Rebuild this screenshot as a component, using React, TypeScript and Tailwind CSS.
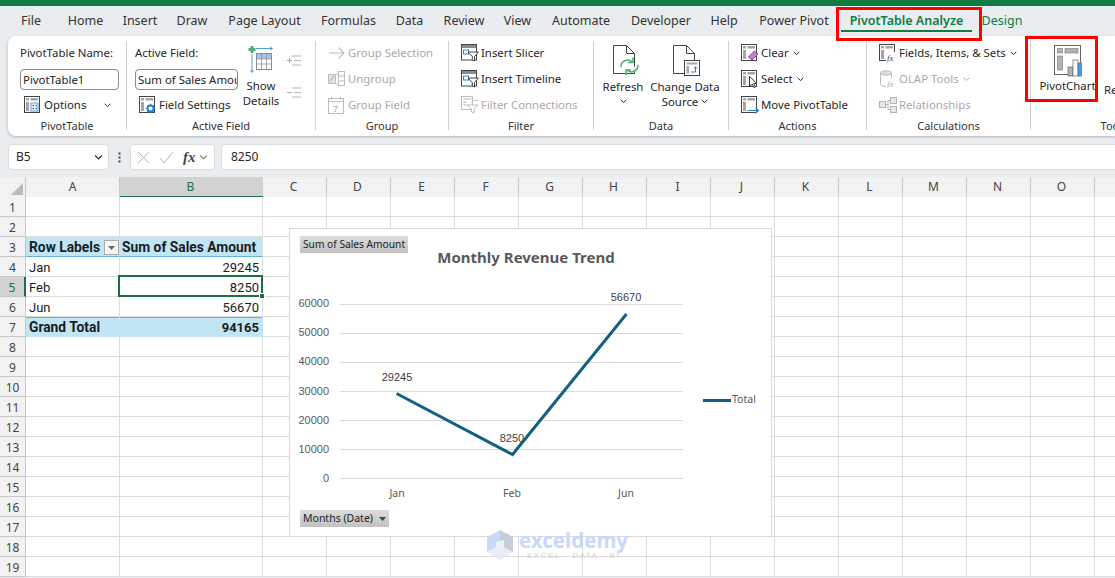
import React from "react";

/* =========================
   DATA
========================= */
const TABS = [
  { name: "File", w: 54 },
  { name: "Home", w: 55 },
  { name: "Insert", w: 54 },
  { name: "Draw", w: 50 },
  { name: "Page Layout", w: 95 },
  { name: "Formulas", w: 73 },
  { name: "Data", w: 49 },
  { name: "Review", w: 60 },
  { name: "View", w: 47 },
  { name: "Automate", w: 80 },
  { name: "Developer", w: 80 },
  { name: "Help", w: 46 },
  { name: "Power Pivot", w: 94 },
];

const COLS = ["C", "D", "E", "F", "G", "H", "I", "J", "K", "L", "M", "N", "O", ""];
const ROWS = Array.from({ length: 19 }, (_, i) => i + 1);
const GRID = "grid grid-cols-[26px_94px_143px_repeat(14,64px)]";

const UI = "font-['Noto_Sans',sans-serif]";
const SHEET = "font-['Roboto',sans-serif]";

/* =========================
   RIBBON ICONS
========================= */
const PivotBase = ({ children, off }: { children?: React.ReactNode; off?: boolean }) => {
  const c = off ? "#bdbdbd" : "#444444";
  const f = off ? "#d4d4d4" : "#a6a6a6";
  return (
    <svg width="18" height="18" viewBox="0 0 18 18" fill="none" className="shrink-0">
      <rect x="0.5" y="0.5" width="15" height="16" stroke={c} fill="#fff" />
      <rect x="2" y="2" width="3" height="2.5" fill={f} />
      <rect x="6.5" y="2" width="7.5" height="2.5" fill={f} />
      <rect x="2" y="6" width="3" height="9" fill={f} />
      {children}
    </svg>
  );
};

const OptionsIcon = () => (
  <PivotBase>
    <rect x="7" y="7" width="7" height="8" fill="#fff" stroke="#3b7fc4" strokeWidth="0.8" />
    <path d="M8.5 9.5h1.5M11.5 9.5h1.5M8.5 12.5h1.5M11.5 12.5h1.5" stroke="#1f6fb5" strokeWidth="1.6" />
  </PivotBase>
);
const GearIcon = () => (
  <PivotBase>
    <circle cx="11.5" cy="12.5" r="3" stroke="#1f7fd0" strokeWidth="1.8" fill="#fff" />
    <path d="M11.5 7.8v2M11.5 15.3v2M7 12.5h2M14 12.5h2.2M8.4 9.4l1.3 1.3M13.4 14.4l1.3 1.3M14.7 9.4l-1.3 1.3M9.7 14.4l-1.3 1.3" stroke="#1f7fd0" strokeWidth="1.2" />
  </PivotBase>
);
const EraserIcon = () => (
  <PivotBase>
    <path d="M7.5 13l6-6 3.5 3-6 6z" fill="#c77fd6" stroke="#8e3aa5" strokeWidth="1" />
  </PivotBase>
);
const CursorIcon = () => (
  <PivotBase>
    <path d="M8.5 6.5l7.5 7h-3.2l1.6 3.5-1.5.6-1.6-3.5-2.8 2z" fill="#fff" stroke="#333" strokeWidth="1" />
  </PivotBase>
);
const MoveIcon = () => (
  <PivotBase>
    <path d="M6.5 14.5h11M14.5 11.8l3 2.7-3 2.7" stroke="#1f84d6" strokeWidth="1.2" />
  </PivotBase>
);
const FxIcon = () => (
  <PivotBase>
    <rect x="7" y="8" width="11" height="10" fill="#fff" />
    <text x="8" y="16.5" fontSize="9" fontStyle="italic" fontFamily="Liberation Serif, serif" fill="#444">fx</text>
  </PivotBase>
);
const SlicerIcon = ({ off }: { off?: boolean }) => {
  const c = off ? "#bdbdbd" : "#444444";
  const b = off ? "#c9c9c9" : "#2f84c9";
  return (
    <svg width="18" height="18" viewBox="0 0 18 18" fill="none" className="shrink-0">
      <rect x="0.5" y="0.5" width="15" height="15.5" stroke={c} />
      <rect x="1" y="1" width="14" height="3" fill={off ? "#d4d4d4" : "#8c8c8c"} />
      <rect x="2.5" y="6" width="5" height="4" stroke={b} />
      <path d="M7 8h10.5l-4 4.5V17l-2.2-1v-3.5z" fill="#fff" stroke={c} />
    </svg>
  );
};
const ConnectIcon = () => (
  <svg width="18" height="18" viewBox="0 0 18 18" fill="none" className="shrink-0">
    <rect x="0.5" y="0.5" width="11" height="13" stroke="#bdbdbd" />
    <path d="M2.5 3h7M2.5 6h3M2.5 9h3" stroke="#c9c9c9" strokeWidth="1.5" />
    <path d="M6 9h11l-4 4v4l-2.5-1v-3z" fill="#fff" stroke="#bdbdbd" />
    <path d="M10 2l3 2.500-3 2.500M13 4.500h4" stroke="#c9c9c9" />
  </svg>
);
const ArrowOff = () => (
  <svg width="18" height="14" viewBox="0 0 18 14" fill="none" className="shrink-0">
    <path d="M1 7h15M10.500 1.500L16 7l-5.500 5.500" stroke="#bdbdbd" strokeWidth="1.1" />
  </svg>
);
const UngroupOff = () => (
  <svg width="18" height="16" viewBox="0 0 18 16" fill="none" className="shrink-0">
    <rect x="0.500" y="3.500" width="7" height="9" fill="#e2e2e2" stroke="#bdbdbd" />
    <path d="M2 10l4-5" stroke="#a8a8a8" />
    <rect x="10.500" y="0.500" width="6" height="14" stroke="#bdbdbd" />
    <path d="M10.500 5h6M10.500 10h6M8 3h2M8 13h2" stroke="#bdbdbd" />
  </svg>
);
const CalendarOff = () => (
  <svg width="16" height="18" viewBox="0 0 16 18" fill="none" className="shrink-0">
    <rect x="0.500" y="2.500" width="15" height="15" stroke="#bdbdbd" />
    <path d="M0.500 5.500h15M3.500 0.500v3M12.500 0.500v3" stroke="#bdbdbd" />
    <text x="5" y="15.500" fontSize="9" fontFamily="Liberation Sans, sans-serif" fill="#a8a8a8">7</text>
  </svg>
);
const OlapIcon = () => (
  <svg width="18" height="18" viewBox="0 0 18 18" fill="none" className="shrink-0">
    <path d="M1.500 3v11c0 1.500 2.500 2.500 5.500 2.500M12.500 3v5" stroke="#bdbdbd" />
    <ellipse cx="7" cy="3" rx="5.500" ry="2.200" fill="#dedede" stroke="#bdbdbd" />
    <text x="8" y="16.500" fontSize="9" fontStyle="italic" fontFamily="Liberation Serif, serif" fill="#a8a8a8">fx</text>
  </svg>
);
const RelationIcon = () => (
  <svg width="18" height="16" viewBox="0 0 18 16" fill="none" className="shrink-0">
    <rect x="0.500" y="4.500" width="6" height="6" fill="#e6e6e6" stroke="#b4b4b4" />
    <rect x="11.500" y="0.500" width="6" height="6" fill="#e6e6e6" stroke="#b4b4b4" />
    <rect x="11.500" y="9.500" width="6" height="6" fill="#e6e6e6" stroke="#b4b4b4" />
    <path d="M6.500 7.500h2.500M9 3.500v9M9 3.500h2.500M9 12.500h2.500" stroke="#b4b4b4" />
  </svg>
);
const ShowDetailsIcon = () => (
  <svg width="28" height="28" viewBox="0 0 28 28" fill="none">
    <path d="M5 1v7M1.500 4.500h7" stroke="#5aa882" strokeWidth="3" />
    <path d="M9 3.500h16M23 2l2.500 1.500L23 5" stroke="#2f84c9" strokeWidth="0.8" />
    <path d="M5 9v18M3.500 25l1.500 2.500L6.500 25" stroke="#2f84c9" strokeWidth="0.8" />
    <rect x="9.500" y="8.500" width="15" height="16" fill="#fff" stroke="#8a8a8a" />
    <rect x="10" y="9" width="14" height="5" fill="#a9c4e6" />
    <path d="M14.500 9v15M19.500 9v15M10 14h14M10 19h14" stroke="#8a8a8a" strokeWidth="0.7" />
  </svg>
);
const PlusMinus = ({ plus }: { plus?: boolean }) => (
  <svg width="15" height="13" viewBox="0 0 15 13" fill="none">
    <path d="M5 2h9M7 6.500h7M5 11h9" stroke="#b5b5b5" />
    <path d={plus ? "M0 6.500h5M2.500 4v5" : "M0 6.500h5"} stroke="#a8a8a8" />
  </svg>
);
const DocIcon = ({ children, className = "" }: { children?: React.ReactNode; className?: string }) => (
  <svg width="28" height="32" viewBox="0 0 28 32" fill="none" className={className}>
    <path d="M0.500 0.500h13l8 8V28.500H0.500z" fill="#fff" stroke="#444" />
    <path d="M13.500 0.500v8h8" stroke="#444" />
    {children}
  </svg>
);
const PivotChartIcon = () => (
  <svg width="28" height="32" viewBox="0 0 28 32" fill="none">
    <rect x="0.500" y="0.500" width="26" height="29" fill="#fff" stroke="#666" />
    <rect x="3.500" y="3.500" width="5" height="4.500" fill="#b3b3b3" stroke="#777" strokeWidth="0.6" />
    <rect x="11" y="3.500" width="13" height="4.500" fill="#b3b3b3" stroke="#777" strokeWidth="0.6" />
    <rect x="3.500" y="11" width="5" height="14" fill="#b3b3b3" stroke="#777" strokeWidth="0.6" />
    <rect x="14" y="22" width="5" height="9" fill="#b3b3b3" stroke="#666" strokeWidth="0.7" />
    <rect x="19" y="15" width="5" height="16" fill="#fff" stroke="#666" strokeWidth="0.7" />
    <rect x="24" y="18" width="4.500" height="13" fill="#4a9bd8" stroke="#2f78b5" strokeWidth="0.7" />
  </svg>
);
const Chevron = ({ className = "" }: { className?: string }) => (
  <svg width="7" height="5" viewBox="0 0 7 5" fill="none" className={className}>
    <path d="M0.700 0.800L3.500 3.600 6.300 0.800" stroke="currentColor" strokeWidth="1" />
  </svg>
);

/* =========================
   RIBBON PIECES
========================= */
const Sep = () => <div className="w-px h-[89px] mt-px bg-[#d1d1d1] shrink-0" />;

const Group = ({ w, label, children }: { w: number; label: string; children: React.ReactNode }) => (
  <div className="flex flex-col shrink-0 h-[94px]" style={{ width: w }}>
    <div className="h-[78px] flex">{children}</div>
    <div className="h-[16px] leading-[16px] text-center text-[11px] text-[#333]">{label}</div>
  </div>
);

const Row = ({ icon, text, off, chevron }: { icon: React.ReactNode; text: string; off?: boolean; chevron?: boolean }) => (
  <div className={`h-[26px] flex items-center gap-[2px] whitespace-nowrap text-[11.4px] ${off ? "text-[#a9a9a9]" : "text-[#262626]"}`}>
    <span className="w-[18px] flex justify-start shrink-0">{icon}</span>
    <span>{text}</span>
    {chevron && <Chevron className="ml-[2px]" />}
  </div>
);

const TextBox = ({ value, w }: { value: string; w: number }) => (
  <div className="h-[26px] flex items-center">
    <div
      className="h-[21px] leading-[19px] px-[2px] rounded-[4px] border border-[#8a8a8a] bg-white text-[11.4px] text-[#222] overflow-hidden whitespace-nowrap"
      style={{ width: w }}
    >
      {value}
    </div>
  </div>
);

const Ribbon = () => (
  <div className={`${UI} ml-2 h-[100px] pt-1 flex bg-white rounded-l-lg shadow-[0_1px_3px_rgba(0,0,0,0.25)] overflow-hidden`}>
    <Group w={118} label="PivotTable">
      <div className="pl-3 flex flex-col">
        <div className="h-[26px] leading-[26px] text-[11.4px] text-[#262626] whitespace-nowrap">PivotTable Name:</div>
        <TextBox value="PivotTable1" w={99} />
        <div className="h-[26px] flex items-center pl-1 text-[11.4px] text-[#262626]">
          <OptionsIcon />
          <span className="ml-[2px] w-[60px]">Options</span>
          <Chevron />
        </div>
      </div>
    </Group>
    <Sep />
    <Group w={188} label="Active Field">
      <div className="pl-2 flex flex-col w-[113px]">
        <div className="h-[26px] leading-[26px] text-[11.4px] text-[#262626]">Active Field:</div>
        <TextBox value="Sum of Sales Amou" w={103} />
        <div className="h-[26px] flex items-center pl-1 gap-[2px] text-[11.4px] text-[#262626] whitespace-nowrap">
          <GearIcon />
          <span>Field Settings</span>
        </div>
      </div>
      <div className="w-[42px] flex flex-col items-center pt-[5px] text-[11.4px] leading-[15px] text-[#262626]">
        <ShowDetailsIcon />
        <div className="mt-[5px] text-center">Show<br />Details</div>
      </div>
      <div className="pl-[5px] flex flex-col pt-[14px] gap-[19px]">
        <PlusMinus plus />
        <PlusMinus />
      </div>
    </Group>
    <Sep />
    <Group w={132} label="Group">
      <div className="pl-3 flex flex-col">
        <Row icon={<ArrowOff />} text="Group Selection" off />
        <Row icon={<UngroupOff />} text="Ungroup" off />
        <Row icon={<CalendarOff />} text="Group Field" off />
      </div>
    </Group>
    <Sep />
    <Group w={144} label="Filter">
      <div className="pl-3 flex flex-col">
        <Row icon={<SlicerIcon />} text="Insert Slicer" />
        <Row icon={<SlicerIcon />} text="Insert Timeline" />
        <Row icon={<ConnectIcon />} text="Filter Connections" off />
      </div>
    </Group>
    <Sep />
    <Group w={134} label="Data">
      <div className="w-[58px] flex flex-col items-center pt-[5px] text-[11.4px] leading-[15px] text-[#262626]">
        <DocIcon className="ml-[8px]">
          <path d="M8 22a6.500 6.500 0 0 1 11-5M25 20a6.500 6.500 0 0 1-11 5" stroke="#4caf6e" strokeWidth="1.500" fill="#fff" />
          <path d="M20 12.500v5h-5M13 30v-5h5" stroke="#4caf6e" strokeWidth="1.500" />
        </DocIcon>
        <div className="mt-[2px]">Refresh</div>
        <Chevron className="mt-[5px]" />
      </div>
      <div className="w-[66px] flex flex-col items-center pt-[5px] text-[11.4px] leading-[15px] text-[#262626] whitespace-nowrap">
        <DocIcon className="ml-[4px]">
          <rect x="11.500" y="15.500" width="15" height="15" fill="#fff" stroke="#444" />
          <rect x="13.500" y="17.500" width="11" height="2" fill="#a6a6a6" />
          <rect x="13.500" y="21" width="2.500" height="7.500" fill="#a6a6a6" />
          <path d="M18 27h4.500v-5M21 23.500l1.500-1.800 1.500 1.800" stroke="#1f84d6" />
        </DocIcon>
        <div className="mt-[2px]">Change Data</div>
        <div className="flex items-center gap-[3px]">Source<Chevron /></div>
      </div>
    </Group>
    <Sep />
    <Group w={137} label="Actions">
      <div className="pl-3 flex flex-col">
        <Row icon={<EraserIcon />} text="Clear" chevron />
        <Row icon={<CursorIcon />} text="Select" chevron />
        <Row icon={<MoveIcon />} text="Move PivotTable" />
      </div>
    </Group>
    <Sep />
    <Group w={163} label="Calculations">
      <div className="pl-3 flex flex-col">
        <Row icon={<FxIcon />} text="Fields, Items, & Sets" chevron />
        <Row icon={<OlapIcon />} text="OLAP Tools" off chevron />
        <Row icon={<RelationIcon />} text="Relationships" off />
      </div>
    </Group>
    <Sep />
    <Group w={166} label="Tools">
      <div className="flex">
        <div className="w-[73px] flex flex-col items-center pt-[5px] text-[11.4px] leading-[15px] text-[#262626]">
          <PivotChartIcon />
          <div className="mt-[1px]">PivotChart</div>
        </div>
        <div className="pt-[42px] text-[11.4px] leading-[15px] text-[#262626]">Recommended</div>
      </div>
    </Group>
  </div>
);

/* =========================
   FORMULA BAR
========================= */
const FormulaBar = () => (
  <div className={`${UI} mt-2 ml-2 h-[26px] flex items-stretch text-[12px] text-[#262626]`}>
    <div className="w-[101px] flex items-center justify-between pl-[7px] pr-[6px] bg-white rounded-[4px] border border-[#dcdcdc]">
      <span>B5</span>
      <Chevron className="scale-125" />
    </div>
    <div className="w-[21px] flex items-center justify-center">
      <svg width="3" height="11" viewBox="0 0 3 11" fill="#444">
        <rect x="0.500" y="0.500" width="2" height="2" />
        <rect x="0.500" y="4.500" width="2" height="2" />
        <rect x="0.500" y="8.500" width="2" height="2" />
      </svg>
    </div>
    <div className="w-[85px] flex items-center bg-white rounded-[4px] border border-[#dcdcdc] pl-[6px] gap-[9px]">
      <svg width="13" height="13" viewBox="0 0 13 13" fill="none">
        <path d="M1 1l11 11M12 1L1 12" stroke="#b5b5b5" />
      </svg>
      <svg width="15" height="13" viewBox="0 0 15 13" fill="none">
        <path d="M1 7l4 5L14 1" stroke="#b5b5b5" />
      </svg>
      <div className="flex items-center gap-[2px]">
        <span className="font-['Liberation_Serif',serif] italic font-bold text-[15px] leading-none text-[#444]">fx</span>
        <Chevron className="scale-125 text-[#888] ml-[2px]" />
      </div>
    </div>
    <div className="ml-[6px] flex-1 flex items-center pl-[9px] bg-white rounded-l-[4px] border border-r-0 border-[#dcdcdc]">8250</div>
  </div>
);

/* =========================
   SHEET
========================= */
const CELL = "border-r border-b border-[#dcdcdc] bg-white h-5 overflow-hidden whitespace-nowrap pl-[2px] pr-[3px] leading-[21px] text-[13px] text-[#1c1c1c]";

const HeaderRow = () => (
  <div className={`${GRID} ${UI} h-5 text-[12px] text-[#444] bg-[#f2f2f2]`}>
    <div className="border-r border-b border-[#c8c8c8] flex items-end justify-end p-[2px]">
      <svg width="12" height="12" viewBox="0 0 12 12"><path d="M12 0v12H0z" fill="#b9b9b9" /></svg>
    </div>
    <div className="border-r border-b border-[#c8c8c8] text-center leading-[20px]">A</div>
    <div className="border-b-2 border-[#1f6e43] bg-[#d2d2d2] text-center leading-[19px] text-[#1f6e43] pr-[2px]">B</div>
    {COLS.map((c, i) => (
      <div key={i} className="border-r border-b border-[#c8c8c8] text-center leading-[20px] pr-[2px]">{c}</div>
    ))}
  </div>
);

const PIVOT: Record<number, { a: string; b: string; kind: string }> = {
  3: { a: "Row Labels", b: "Sum of Sales Amount", kind: "head" },
  4: { a: "Jan", b: "29245", kind: "item" },
  5: { a: "Feb", b: "8250", kind: "item" },
  6: { a: "Jun", b: "56670", kind: "item" },
  7: { a: "Grand Total", b: "94165", kind: "total" },
};

const SheetRow = ({ n }: { n: number }) => {
  const p = PIVOT[n];
  const head = p?.kind === "head";
  const total = p?.kind === "total";
  const filled = head || total;
  const tone = filled
    ? `!bg-[#c0e5f5] font-bold ${head ? "!border-b-[#61b4de]" : ""} ${total ? "!border-b-[#c0e5f5] !border-r-[#c0e5f5]" : ""}`
    : "";
  return (
    <div className={`${GRID} ${SHEET} h-5`}>
      <div
        className={`${UI} h-5 text-center text-[12px] leading-[21px] border-r border-b border-[#c8c8c8] ${
          n === 5 ? "bg-[#d2d2d2] text-[#1f6e43] !border-r-2 !border-r-[#1f6e43]" : "bg-[#f2f2f2] text-[#444]"
        }`}
      >
        {n}
      </div>
      <div className={`${CELL} ${tone} relative !pl-[3px] ${filled ? "!text-[13.8px]" : ""} ${head ? "!border-r-[#c0e5f5]" : ""} ${n === 7 ? "shadow-[inset_0_1px_0_#61b4de]" : ""}`}>
        {p?.a}
        {head && (
          <span className="absolute right-0 top-[3px] w-[15px] h-[15px] bg-[#f3f3f3] border border-[#ababab] flex items-center justify-center">
            <svg width="7" height="4" viewBox="0 0 7 4"><path d="M0 0h7L3.500 4z" fill="#666" /></svg>
          </span>
        )}
      </div>
      <div className={`${CELL} ${tone} ${head ? "!text-[13.8px]" : ""} ${p && !head ? "text-right" : ""} relative ${n === 7 ? "shadow-[inset_0_1px_0_#61b4de]" : ""}`}>
        {p?.b}
      </div>
      {COLS.map((c, i) => (
        <div key={i} className={CELL} />
      ))}
    </div>
  );
};

/* =========================
   CHART
========================= */
const AXIS = [60000, 50000, 40000, 30000, 20000, 10000, 0];

const PivotChart = () => (
  <div className="absolute left-[289px] top-[228px] w-[483px] h-[309px] bg-white border border-[#d9d9d9]">
    <svg width="481" height="307" viewBox="0 0 481 307" className="font-['Liberation_Sans',sans-serif]">
      {AXIS.map((v, i) => (
        <g key={v}>
          <line x1="50" x2="393" y1={75.500 + i * 29} y2={75.500 + i * 29} stroke="#d9d9d9" />
          <text x="39" y={(i < 3 ? 78 : 79) + i * 29} textAnchor="end" fontSize="11" fill="#595959">{v}</text>
        </g>
      ))}
      <text x="236" y="34" textAnchor="middle" fontSize="15" fontWeight="700" fill="#595959" style={{ fontFamily: "Noto Sans, sans-serif" }}>
        Monthly Revenue Trend
      </text>
      <polyline points="106.500,164.500 222.500,225.500 336.500,85" fill="none" stroke="#156082" strokeWidth="3" />
      <text x="107" y="152" textAnchor="middle" fontSize="11" fill="#404040">29245</text>
      <text x="222" y="213" textAnchor="middle" fontSize="11" fill="#404040">8250</text>
      <text x="336" y="72" textAnchor="middle" fontSize="11" fill="#404040">56670</text>
      <text x="107" y="268" textAnchor="middle" fontSize="10.500" fill="#595959" style={{ fontFamily: "Noto Sans, sans-serif" }}>Jan</text>
      <text x="222" y="268" textAnchor="middle" fontSize="10.500" fill="#595959" style={{ fontFamily: "Noto Sans, sans-serif" }}>Feb</text>
      <text x="336" y="268" textAnchor="middle" fontSize="10.500" fill="#595959" style={{ fontFamily: "Noto Sans, sans-serif" }}>Jun</text>
      <line x1="413" x2="441" y1="171.500" y2="171.500" stroke="#156082" strokeWidth="3" />
      <text x="442" y="174" fontSize="10.500" fill="#595959" style={{ fontFamily: "Noto Sans, sans-serif" }}>Total</text>
    </svg>
    <div className={`${UI} absolute left-[10px] top-[7px] w-[108px] h-[17px] leading-[17px] pl-[3px] text-[10.200px] text-[#222] whitespace-nowrap bg-gradient-to-b from-[#dcdcdc] to-[#c2c2c2]`}>
      Sum of Sales Amount
    </div>
    <div className={`${UI} absolute left-[10px] top-[281px] w-[89px] h-[17px] leading-[17px] pl-[3px] text-[10.500px] text-[#222] whitespace-nowrap bg-gradient-to-b from-[#dcdcdc] to-[#c2c2c2] flex items-center gap-[6px]`}>
      Months (Date)
      <svg width="7" height="4" viewBox="0 0 7 4"><path d="M0 0h7L3.500 4z" fill="#444" /></svg>
    </div>
  </div>
);

const Watermark = () => (
  <div className="absolute left-[486px] top-[530px] flex items-start gap-[5px] pointer-events-none">
    <svg width="28" height="32" viewBox="0 0 28 32">
      <path d="M14 0l13 7v15L14 29 1 22V7z" fill="#c9d8fb" />
      <path d="M14 0l13 7v15l-13-7z" fill="#c7cdd6" />
      <path d="M14 15l13 7-13 8-13-8z" fill="#e6edf5" />
      <path d="M10 12l8-2v9l-8 0z" fill="#eef2f7" />
    </svg>
    <div className="flex flex-col items-center">
      <div className="font-['Noto_Sans',sans-serif] font-bold text-[20.500px] leading-[21px] text-[#c9d8fb]">exceldemy</div>
      <div className="mt-[1px] font-['Liberation_Sans',sans-serif] text-[8px] leading-[8px] tracking-[1.500px] text-[#d2d2d2]">EXCEL - DATA - BI</div>
    </div>
  </div>
);

/* =========================
   MAIN
========================= */
export default function App() {
  return (
    <div className="relative w-[1115px] h-[578px] overflow-hidden bg-[#e9edf0]">
      <div className="h-[6px] bg-[#107c41]" />

      {/* TABS */}
      <div className={`${UI} h-[30px] pl-1 pt-[1px] flex items-center text-[12.500px] text-[#333]`}>
        {TABS.map((t) => (
          <div key={t.name} className="text-center shrink-0" style={{ width: t.w }}>{t.name}</div>
        ))}
        <div className="relative w-[131px] shrink-0 text-center font-semibold text-[#107c41]">
          PivotTable Analyze
          <div className="absolute left-0 right-0 top-[18px] h-[2px] bg-[#107c41]" />
        </div>
        <div className="w-[60px] shrink-0 text-center text-[#107c41]">Design</div>
      </div>

      <Ribbon />
      <FormulaBar />

      {/* SHEET */}
      <div className="mt-[7px]">
        <HeaderRow />
        {ROWS.map((n) => (
          <SheetRow key={n} n={n} />
        ))}
      </div>

      {/* selected cell */}
      <div className="absolute left-[118px] top-[275px] w-[145px] h-[22px] border-2 border-[#1f6e43] pointer-events-none">
        <div className="absolute right-[-4px] bottom-[-4px] w-[6px] h-[6px] bg-[#1f6e43] border border-white" />
      </div>

      <PivotChart />
      <Watermark />

      {/* red highlights */}
      <div className="absolute left-[836px] top-[7px] w-[146px] h-[34px] border-[3px] border-[#ff0000]" />
      <div className="absolute left-[1025px] top-[36px] w-[73px] h-[66px] border-[3px] border-[#ff0000]" />
    </div>
  );
}
